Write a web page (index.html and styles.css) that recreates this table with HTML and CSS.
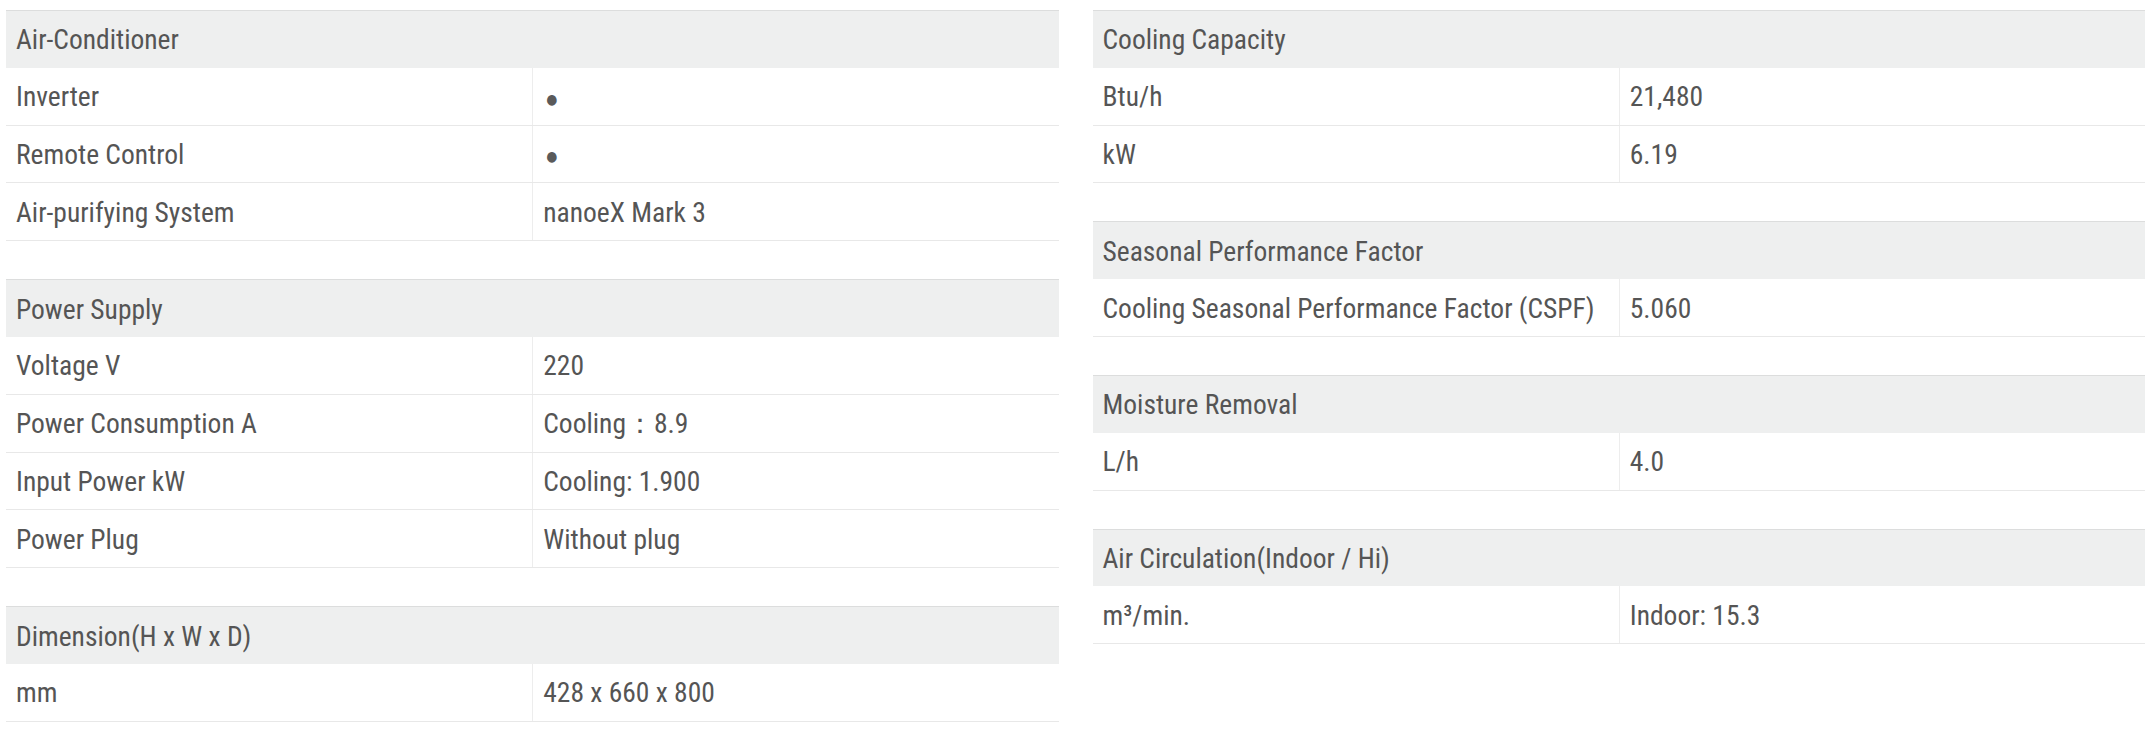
FILE: index.html
```html
<!DOCTYPE html>
<html lang="en">
<head>
<meta charset="utf-8">
<title>Specifications</title>
<link rel="stylesheet" href="styles.css">
</head>
<body>
<div class="specs">
  <div class="col">
    <section class="group">
      <div class="head">Air-Conditioner</div>
      <div class="row"><div class="label">Inverter</div><div class="value"><span class="dot">●</span></div></div>
      <div class="row"><div class="label">Remote Control</div><div class="value"><span class="dot">●</span></div></div>
      <div class="row"><div class="label">Air-purifying System</div><div class="value">nanoeX Mark 3</div></div>
    </section>
    <section class="group">
      <div class="head">Power Supply</div>
      <div class="row"><div class="label">Voltage V</div><div class="value">220</div></div>
      <div class="row"><div class="label">Power Consumption A</div><div class="value">Cooling：8.9</div></div>
      <div class="row"><div class="label">Input Power kW</div><div class="value">Cooling: 1.900</div></div>
      <div class="row"><div class="label">Power Plug</div><div class="value">Without plug</div></div>
    </section>
    <section class="group">
      <div class="head">Dimension(H x W x D)</div>
      <div class="row"><div class="label">mm</div><div class="value">428 x 660 x 800</div></div>
    </section>
  </div>
  <div class="col">
    <section class="group">
      <div class="head">Cooling Capacity</div>
      <div class="row"><div class="label">Btu/h</div><div class="value">21,480</div></div>
      <div class="row"><div class="label">kW</div><div class="value">6.19</div></div>
    </section>
    <section class="group">
      <div class="head">Seasonal Performance Factor</div>
      <div class="row"><div class="label">Cooling Seasonal Performance Factor (CSPF)</div><div class="value">5.060</div></div>
    </section>
    <section class="group">
      <div class="head">Moisture Removal</div>
      <div class="row"><div class="label">L/h</div><div class="value">4.0</div></div>
    </section>
    <section class="group">
      <div class="head">Air Circulation(Indoor / Hi)</div>
      <div class="row"><div class="label">m³/min.</div><div class="value">Indoor: 15.3</div></div>
    </section>
  </div>
</div>
</body>
</html>
```
FILE: styles.css
```css
html, body {
  margin: 0;
  padding: 0;
  background: #ffffff;
}

body {
  font-family: "Roboto", "Liberation Sans", sans-serif;
  font-stretch: semi-condensed;
  font-size: 27.5px;
  color: #555555;
}

.specs {
  display: grid;
  grid-template-columns: 1fr 1fr;
  column-gap: 34px;
  padding: 10px 8px 0 6px;
}

.col {
  display: flex;
  flex-direction: column;
  gap: 38px;
}

.group {
  display: flex;
  flex-direction: column;
}

.head {
  box-sizing: border-box;
  height: 57.8px;
  display: flex;
  align-items: center;
  padding: 1px 10px 0;
  background: #eeefef;
  border-top: 1px solid #dcdddd;
}

.row {
  box-sizing: border-box;
  height: 57.8px;
  display: grid;
  grid-template-columns: 1fr 1fr;
  border-bottom: 1px solid #e8e8e8;
}

.label,
.value {
  display: flex;
  align-items: center;
  padding: 1px 10px 0;
  white-space: nowrap;
}

.value {
  border-left: 1px solid #ededed;
}

.dot {
  font-family: "DejaVu Sans", sans-serif;
  font-size: 14px;
  color: #5a5a5a;
  position: relative;
  top: 2px;
  left: 3px;
}
```
